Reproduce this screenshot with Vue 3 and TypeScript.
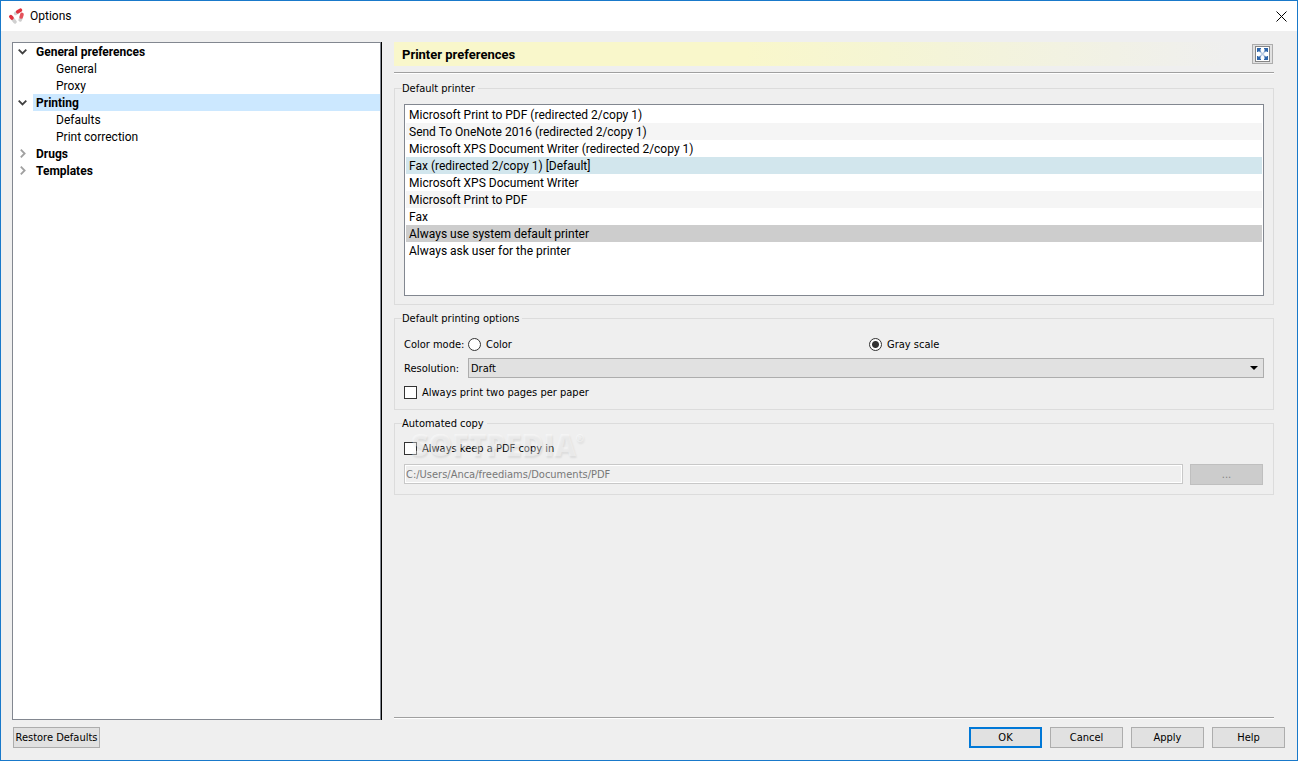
<script setup lang="ts">
import { ref } from 'vue'

interface Section {
  name: string
  open: boolean
  children: string[]
}

const sections = ref<Section[]>([
  { name: 'General preferences', open: true, children: ['General', 'Proxy'] },
  { name: 'Printing', open: true, children: ['Defaults', 'Print correction'] },
  { name: 'Drugs', open: false, children: [] },
  { name: 'Templates', open: false, children: [] },
])
const activePage = ref('Printing')

const printers: string[] = [
  'Microsoft Print to PDF (redirected 2/copy 1)',
  'Send To OneNote 2016 (redirected 2/copy 1)',
  'Microsoft XPS Document Writer (redirected 2/copy 1)',
  'Fax (redirected 2/copy 1) [Default]',
  'Microsoft XPS Document Writer',
  'Microsoft Print to PDF',
  'Fax',
  'Always use system default printer',
  'Always ask user for the printer',
]
const systemDefault = 3
const selectedPrinter = ref(7)

const colorMode = ref('gray')
const resolution = ref('Draft')
const twoPages = ref(false)
const keepPdf = ref(false)
const pdfPath = ref('C:/Users/Anca/freediams/Documents/PDF')
</script>

<template>
  <div class="window">
    <header class="titlebar">
      <svg class="logo" width="17" height="17" viewBox="0 0 17 17" aria-hidden="true">
        <g fill="none" stroke-linecap="round" stroke-width="3.6">
          <path d="M7.6 5.4 10 3.8" stroke="#d0d0d0" />
          <path d="M9.8 3.8 12.4 2.2" stroke="#e0323e" />
          <path d="M12.2 11.8 13 9.8" stroke="#cdcdcd" />
          <path d="M13.2 9 14 6.4" stroke="#e4525b" />
          <path d="M5 11.4 7 13.8" stroke="#d0d0d0" />
          <path d="M2.8 8.6 4 10" stroke="#e0323e" />
        </g>
      </svg>
      <h1 class="title">Options</h1>
      <button class="close" type="button" aria-label="Close">
        <svg width="11" height="11" viewBox="0 0 11 11"><path d="M.5.5l10 10M10.5.5l-10 10" stroke="#000" fill="none" /></svg>
      </button>
    </header>

    <main class="content">
      <nav class="tree" aria-label="Option pages">
        <ul>
          <li v-for="section in sections" :key="section.name">
            <div class="row">
              <button class="toggle" type="button" :aria-label="'Toggle ' + section.name" @click="section.open = !section.open">
                <svg v-if="section.open" width="10" height="6" viewBox="0 0 10 6"><path d="M.7.7 4.5 4.5 8.3.7" fill="none" stroke="#404040" stroke-width="1.8" /></svg>
                <svg v-else width="6" height="9" viewBox="0 0 6 9"><path d="M.8.7 4.6 4.5.8 8.3" fill="none" stroke="#a0a0a0" stroke-width="1.8" /></svg>
              </button>
              <button class="node parent" :class="{ active: activePage === section.name }" type="button" @click="activePage = section.name">{{ section.name }}</button>
            </div>
            <ul v-if="section.open">
              <li v-for="child in section.children" :key="child" class="row child">
                <button class="node" :class="{ active: activePage === child }" type="button" @click="activePage = child">{{ child }}</button>
              </li>
            </ul>
          </li>
        </ul>
      </nav>

      <section class="pane">
        <div class="banner">
          <h2>Printer preferences</h2>
          <button class="expand" type="button" aria-label="Full screen">
            <svg width="15" height="16" viewBox="0 0 15 16">
              <rect x=".5" y=".5" width="14" height="15" fill="#fff" stroke="#858585" />
              <path d="M4 4.5l7 7M11 4.5l-7 7" stroke="#b9cbe2" stroke-width="1.6" />
              <path d="M2 2h4v1L5 4l1 1-1 1-1-1-1 1H2zM13 2v4h-1l-1-1-1 1-1-1 1-1-1-1V2zM2 14v-4h1l1 1 1-1 1 1-1 1 1 1v1zM13 14H9v-1l1-1-1-1 1-1 1 1 1-1h1z" fill="#2f66aa" />
            </svg>
          </button>
        </div>
        <hr />

        <fieldset class="group">
          <legend>Default printer</legend>
          <ul class="printers" role="listbox" aria-label="Default printer">
            <li
              v-for="(printer, i) in printers"
              :key="i"
              role="option"
              :aria-selected="selectedPrinter === i"
              :class="{ standard: i === systemDefault, selected: selectedPrinter === i }"
              @click="selectedPrinter = i"
            >{{ printer }}</li>
          </ul>
        </fieldset>

        <fieldset class="group options">
          <legend>Default printing options</legend>
          <div class="field">
            <span id="mode-label">Color mode:</span>
            <div class="modes" role="radiogroup" aria-labelledby="mode-label">
              <label class="choice"><input v-model="colorMode" type="radio" name="mode" value="color" />Color</label>
              <label class="choice"><input v-model="colorMode" type="radio" name="mode" value="gray" />Gray scale</label>
            </div>
          </div>
          <div class="field resolution">
            <label for="resolution">Resolution:</label>
            <div class="combo">
              <select id="resolution" v-model="resolution">
                <option>Draft</option>
                <option>Normal</option>
                <option>High</option>
              </select>
              <svg class="arrow" width="8" height="4" viewBox="0 0 8 4" aria-hidden="true"><path d="M0 0h8L4 4z" /></svg>
            </div>
          </div>
          <label class="choice check"><input v-model="twoPages" type="checkbox" />Always print two pages per paper</label>
        </fieldset>

        <fieldset class="group copy">
          <legend>Automated copy</legend>
          <label class="choice check"><input v-model="keepPdf" type="checkbox" />Always keep a PDF copy in</label>
          <div class="path">
            <input v-model="pdfPath" type="text" aria-label="PDF folder" :disabled="!keepPdf" />
            <button class="push" type="button" aria-label="Browse" :disabled="!keepPdf">...</button>
          </div>
          <div class="watermark">SOFTPEDIA<sup>®</sup></div>
        </fieldset>
        <hr class="bottom" />
      </section>
    </main>

    <footer class="actions">
      <button class="push restore" type="button">Restore Defaults</button>
      <button class="push primary" type="button">OK</button>
      <button class="push" type="button">Cancel</button>
      <button class="push" type="button">Apply</button>
      <button class="push" type="button">Help</button>
    </footer>
  </div>
</template>

<style>
body {
  margin: 0;
}
</style>

<style scoped>
.window {
  --ui: "DejaVu Sans Condensed", "DejaVu Sans", sans-serif;
  --text: Roboto, "Noto Sans", sans-serif;
  box-sizing: border-box;
  display: flex;
  flex-direction: column;
  min-height: 100vh;
  border: 1px solid #1979ca;
  background: #efefef;
  color: #000;
  font: 11px/15px var(--ui);
}
.window * {
  box-sizing: border-box;
}
button,
input,
select {
  margin: 0;
  color: inherit;
  font: inherit;
}
ul {
  margin: 0;
  padding: 0;
  list-style: none;
}
.titlebar {
  display: flex;
  align-items: center;
  height: 30px;
  padding: 0 10px 0 7px;
  background: #fff;
}
.title {
  flex: 1;
  margin: 0 0 0 5px;
  font: 12px/16px var(--text);
}
.close {
  display: flex;
  padding: 0;
  border: 0;
  background: none;
}
.content {
  display: flex;
  flex: 1;
  gap: 13px;
  padding: 11px 23px 0 11px;
}
.tree {
  flex: 0 0 369px;
  border: 1px solid #828790;
  background: #fff;
  box-shadow: 1px 0 #000;
  font: 12px/16px var(--text);
}
.row {
  display: flex;
  height: 17px;
}
.toggle {
  display: flex;
  align-items: center;
  justify-content: center;
  width: 20px;
  padding: 0;
  border: 0;
  background: none;
}
.node {
  flex: 1;
  padding: 1px 3px 0;
  border: 0;
  background: none;
  text-align: left;
}
.parent {
  font-weight: 700;
}
.child {
  padding-left: 40px;
}
.active {
  background: #cce8ff;
}
.pane {
  display: flex;
  flex: 1;
  flex-direction: column;
  min-width: 0;
}
.banner {
  display: flex;
  align-items: center;
  justify-content: space-between;
  height: 24px;
  padding: 0 1px 0 8px;
  background: linear-gradient(90deg, #f9f7cb 40%, #f5f5d4 56%, #efefef 95%);
}
.banner h2 {
  margin: 0;
  padding-top: 2px;
  font: 700 13px/18px var(--text);
}
.expand {
  display: flex;
  align-items: center;
  justify-content: center;
  width: 21px;
  height: 20px;
  padding: 0;
  border: 1px solid #adadad;
  background: #e1e1e1;
}
hr {
  width: 100%;
  height: 2px;
  margin: 6px 0 7px;
  border: 0;
  border-top: 1px solid #a0a0a0;
  border-bottom: 1px solid #fff;
}
hr.bottom {
  margin: auto 0 1px;
}
.group {
  min-width: 0;
  margin: 0 0 6px;
  padding: 8px 9px 8px;
  border: 1px solid #dcdcdc;
}
legend {
  margin-left: -2px;
  padding: 0 3px 0 0;
}
.printers {
  height: 192px;
  padding: 1px;
  border: 1px solid #828790;
  background: #fff;
  font: 12px/16px var(--text);
}
.printers li {
  padding: 1px 3px 0;
}
.printers li:nth-child(even) {
  background: #f5f5f5;
}
.printers li.standard {
  background: #d2e6ed;
}
.printers li.selected {
  background: #cdcdcd;
}
.options {
  padding: 8px 9px 7px;
}
.field {
  display: grid;
  grid-template-columns: 64px 1fr;
  align-items: center;
  height: 20px;
}
.resolution {
  margin: 4px 0 5px;
}
.modes {
  display: grid;
  grid-template-columns: 1fr 1fr;
  gap: 6px;
}
.choice {
  display: flex;
  align-items: center;
  gap: 5px;
}
.check {
  height: 19px;
}
.choice input {
  width: 13px;
  height: 13px;
  border: 1px solid #333;
  background: #fff;
  appearance: none;
}
.choice input[type="radio"] {
  border-radius: 50%;
}
.choice input[type="radio"]:checked {
  background: radial-gradient(circle, #333 3px, #fff 4px);
}
.choice input[type="checkbox"]:checked {
  background: #333;
  box-shadow: inset 0 0 0 2px #fff;
}
.combo {
  position: relative;
}
.combo select {
  display: block;
  width: 100%;
  height: 20px;
  padding: 0 20px 0 2px;
  border: 1px solid #adadad;
  border-radius: 0;
  background: #e1e1e1;
  appearance: none;
}
.arrow {
  position: absolute;
  top: 8px;
  right: 6px;
  pointer-events: none;
}
.copy {
  position: relative;
  padding: 8px 10px 9px 9px;
}
.path {
  display: flex;
  align-items: flex-start;
  gap: 7px;
  margin-top: 6px;
}
.path input {
  flex: 1;
  min-width: 0;
  height: 20px;
  padding: 0 1px;
  border: 1px solid #c8c8c8;
  background: #fff;
}
.path input:disabled {
  background: #efefef;
  box-shadow: inset 0 0 0 1px #fff;
  color: #787878;
}
.push {
  width: 73px;
  height: 21px;
  padding: 0;
  border: 1px solid #adadad;
  background: #e1e1e1;
}
.push:disabled {
  border-color: #bfbfbf;
  background: #ccc;
  color: #838383;
}
.watermark {
  position: absolute;
  top: -3px;
  left: 16px;
  color: rgba(255, 255, 255, 0.4);
  font: 800 30px/34px "Open Sans", sans-serif;
  text-shadow: 1px 2px 2px rgba(0, 0, 0, 0.08);
  pointer-events: none;
}
.watermark sup {
  font-size: 10px;
  line-height: 10px;
  vertical-align: 14px;
}
.actions {
  display: flex;
  gap: 8px;
  padding: 7px 12px 12px;
}
.restore {
  width: 87px;
  margin-right: auto;
}
.primary {
  border: 2px solid #0078d7;
}
</style>
